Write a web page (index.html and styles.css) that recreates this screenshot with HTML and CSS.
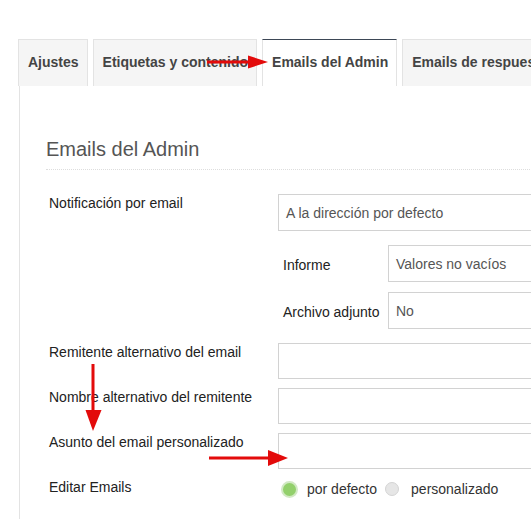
FILE: index.html
```html
<!DOCTYPE html>
<html lang="es">
<head>
    <meta charset="UTF-8">
    <title>Emails del Admin</title>
    <link rel="stylesheet" href="styles.css">
</head>
<body>
    <div class="page">
        <ul class="tabs">
            <li class="tab">Ajustes</li>
            <li class="tab">Etiquetas y contenido</li>
            <li class="tab active">Emails del Admin</li>
            <li class="tab">Emails de respuesta</li>
        </ul>

        <div class="panel">
            <h2 class="section-title">Emails del Admin</h2>

            <div class="form">
                <div class="row">
                    <label class="label">Notificación por email</label>
                    <div class="control">
                        <div class="select tall">A la dirección por defecto</div>
                        <div class="sub">
                            <div class="sub-row">
                                <label class="sub-label">Informe</label>
                                <div class="select tall">Valores no vacíos</div>
                            </div>
                            <div class="sub-row">
                                <label class="sub-label">Archivo adjunto</label>
                                <div class="select tall">No</div>
                            </div>
                        </div>
                    </div>
                </div>

                <div class="row">
                    <label class="label">Remitente alternativo del email</label>
                    <div class="control"><input type="text" class="input"></div>
                </div>

                <div class="row">
                    <label class="label">Nombre alternativo del remitente</label>
                    <div class="control"><input type="text" class="input"></div>
                </div>

                <div class="row">
                    <label class="label">Asunto del email personalizado</label>
                    <div class="control"><input type="text" class="input"></div>
                </div>

                <div class="row">
                    <label class="label">Editar Emails</label>
                    <div class="control radios">
                        <span class="radio checked"></span>
                        <span class="radio-text">por defecto</span>
                        <span class="radio"></span>
                        <span class="radio-text">personalizado</span>
                    </div>
                </div>
            </div>
        </div>

        <!-- red annotation arrows drawn over the screenshot -->
        <svg class="arrows" width="531" height="519" viewBox="0 0 531 519">
            <g fill="#e30b0b">
                <rect x="207" y="60.5" width="43" height="3"/>
                <polygon points="248,55.5 268,62 248,68.5"/>
                <rect x="91.5" y="364" width="3" height="48"/>
                <polygon points="85.5,410 101.5,410 93,431"/>
                <rect x="209" y="456.5" width="62" height="3"/>
                <polygon points="268,450 288,458 268,466"/>
            </g>
        </svg>
    </div>
</body>
</html>
```

FILE: styles.css
```css
:root {
    --border: #e3e3e3;
    --input-border: #d2d2d2;
    --tab-bg: #f5f5f5;
    --text: #222;
    --muted: #555;
}

body {
    margin: 0;
    font-family: 'Liberation Sans', Arial, sans-serif;
    font-size: 14px;
    color: var(--text);
    background: #fff;
    overflow: hidden;
}

.page {
    position: relative;
    width: 531px;
    height: 519px;
    overflow: hidden;
    padding: 39px 0 0 18px;
    box-sizing: border-box;
}

/* Tabs */
.tabs {
    list-style: none;
    margin: 0;
    padding: 0;
    display: flex;
    white-space: nowrap;
}

.tab {
    background: var(--tab-bg);
    border: 1px solid var(--border);
    border-bottom: none;
    padding: 12px 8px 14px 9px;
    margin-right: 5px;
    line-height: 20px;
    font-weight: bold;
    color: #444;
    flex: none;
}

.tab.active {
    background: #fff;
    border-top-color: #3d4756;
}

/* Panel */
.panel {
    width: 680px;
    margin-left: 1px;
    border-left: 1px solid var(--border);
    padding: 51px 0 40px 26px;
}

.section-title {
    margin: 0 0 24px;
    padding-bottom: 8px;
    font-size: 20px;
    line-height: 24px;
    font-weight: normal;
    color: var(--muted);
    border-bottom: 1px dotted #ddd;
}

.form {
    padding-left: 3px;
}

.row {
    display: grid;
    grid-template-columns: 229px 1fr;
    margin-bottom: 9px;
}

.row:first-child {
    margin-bottom: 14px;
}

.label {
    line-height: 16px;
    padding-top: 1px;
}

.select,
.input {
    display: block;
    box-sizing: border-box;
    width: 100%;
    height: 36px;
    border: 1px solid var(--input-border);
    background: #fff;
    font: inherit;
    color: var(--muted);
    padding: 0 7px;
    line-height: 35px;
    margin: 0;
}

.select.tall {
    height: 37px;
    line-height: 37px;
}

.sub {
    margin-top: 14px;
    padding-left: 5px;
}

.sub-row {
    display: grid;
    grid-template-columns: 105px 1fr;
    align-items: center;
    margin-bottom: 10px;
}

.sub-row:last-child {
    margin-bottom: 0;
}

.sub-label {
    color: var(--text);
    padding-top: 2px;
}

/* Radios */
.radios {
    display: flex;
    align-items: center;
    padding-left: 3px;
    padding-top: 3px;
    height: 16px;
    color: #333;
}

.radio {
    box-sizing: border-box;
    width: 14px;
    height: 14px;
    border-radius: 50%;
    background: #e6e6e6;
    border: 1px solid #d4d4d4;
    flex: none;
}

.radio.checked {
    width: 17px;
    height: 17px;
    background: #93d06c;
    border: 2px solid #d2e9c4;
}

.radio-text {
    margin-left: 9px;
    margin-right: 8px;
}

.radio + .radio-text + .radio + .radio-text {
    margin-left: 12px;
}

.arrows {
    position: absolute;
    top: 0;
    left: 0;
    pointer-events: none;
}
```
